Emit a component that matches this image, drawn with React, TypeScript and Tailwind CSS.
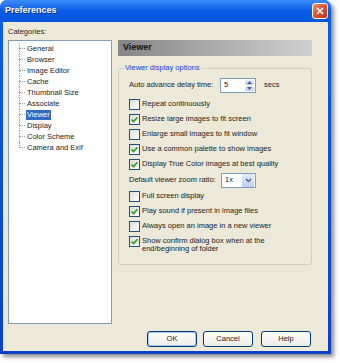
import React from "react";

const font = { fontFamily: '"Liberation Sans", Arial, sans-serif' };

function Check({ checked, label, second }: { checked?: boolean; label: string; second?: string }) {
  return (
    <div className="flex items-start gap-[2px]">
      <div className="w-[11px] h-[11px] shrink-0 border border-[#1C5180] bg-gradient-to-br from-[#DCDCD7] to-white flex items-center justify-center">
        {checked && (
          <svg width="7" height="7" viewBox="0 0 7 7">
            <path d="M0.5 3.5 L2.6 5.6 L6.5 1.2" stroke="#21A121" strokeWidth="1.6" fill="none" />
          </svg>
        )}
      </div>
      <div className="text-[7.5px] leading-[8px] text-[#222] pt-[1px] whitespace-nowrap">
        <div>{label}</div>
        {second && <div>{second}</div>}
      </div>
    </div>
  );
}

function XPButton({ label, def }: { label: string; def?: boolean }) {
  return (
    <div
      className={`w-[50px] h-[16px] rounded-[3px] border border-[#003C74] bg-gradient-to-b from-white to-[#ECEBE6] flex items-center justify-center text-[7.5px] text-[#222] ${
        def ? "shadow-[inset_0_0_0_1px_#A8C8F5]" : ""
      }`}
    >
      {label}
    </div>
  );
}

const items = [
  "General",
  "Browser",
  "Image Editor",
  "Cache",
  "Thumbnail Size",
  "Associate",
  "Viewer",
  "Display",
  "Color Scheme",
  "Camera and Exif",
];

export default function App() {
  return (
    <div className="w-[340px] h-[363px] bg-white" style={font}>
      <div className="w-[331px] h-[354px] rounded-t-[7px] bg-gradient-to-b from-[#0A5FEA] to-[#0841C8] shadow-[3px_3px_4px_rgba(0,0,0,0.45)] flex flex-col">
        {/* title bar */}
        <div className="h-[22px] shrink-0 rounded-t-[7px] bg-gradient-to-b from-[#3B8CF8] via-[#0A5BE6] to-[#0556DD] flex items-center justify-between pl-[5px] pr-[3px]">
          <span className="text-white font-bold text-[9px] [text-shadow:1px_1px_0_#0A2A7A]">Preferences</span>
          <div className="w-[16px] h-[16px] rounded-[3px] border border-white bg-gradient-to-br from-[#E8907A] via-[#D9522E] to-[#C4361A] flex items-center justify-center">
            <svg width="8" height="8" viewBox="0 0 8 8">
              <path d="M1 1 L7 7 M7 1 L1 7" stroke="white" strokeWidth="1.7" />
            </svg>
          </div>
        </div>
        {/* body */}
        <div className="flex-1 mx-[3px] mb-[3px] bg-[#ECE9D8] flex flex-col px-[5px] pt-[6px]">
          <div className="text-[7.5px] leading-[8px] text-[#222] h-[12px]">Categories:</div>
          <div className="flex gap-[6px]">
            {/* tree */}
            <div className="w-[104px] h-[284px] bg-white border border-[#7F9DB9] pt-[2px] relative">
              {items.map((it, i) => (
                <div key={it} className="h-[11px] flex items-center relative">
                  <div className="absolute left-[10px] top-0 border-l border-dotted border-[#A0A0A0]" style={{ height: i === items.length - 1 ? 6 : 11 }} />
                  <div className="absolute left-[10px] top-[5px] w-[6px] border-t border-dotted border-[#A0A0A0]" />
                  <span
                    className={`ml-[17px] text-[7.5px] leading-[10px] px-[1px] ${
                      it === "Viewer" ? "bg-[#316AC5] text-white" : "text-[#222]"
                    }`}
                  >
                    {it}
                  </span>
                </div>
              ))}
            </div>
            {/* right panel */}
            <div className="w-[194px] flex flex-col">
              <div className="h-[16px] bg-gradient-to-r from-[#858585] via-[#ACACAC] to-[#D0D0D0] flex items-center pl-[5px]">
                <span className="font-bold text-[9px] text-[#111]">Viewer</span>
              </div>
              <div className="relative mt-[12px] h-[197px] border border-[#D0D0BF] rounded-[3px] pl-[10px] pr-[4px] pt-[8px]">
                <div className="absolute -top-[6px] left-[5px] px-[1px] bg-[#ECE9D8] text-[7.5px] leading-[10px] text-[#0046D5]">
                  Viewer display options
                </div>
                <div className="flex items-center h-[16px]">
                  <span className="text-[7.5px] text-[#222] w-[91px] whitespace-nowrap">Auto advance delay time:</span>
                  <div className="w-[36px] h-[15px] border border-[#7F9DB9] bg-white flex items-center justify-between">
                    <span className="text-[7.5px] pl-[3px] text-[#222]">5</span>
                    <div className="w-[11px] h-full flex flex-col gap-[1px] p-[1px]">
                      <div className="flex-1 rounded-[1px] bg-gradient-to-b from-[#E3ECFC] to-[#BCD0F4] flex items-center justify-center">
                        <svg width="5" height="3" viewBox="0 0 5 3"><path d="M0 3 L2.5 0 L5 3" fill="#4D6185" /></svg>
                      </div>
                      <div className="flex-1 rounded-[1px] bg-gradient-to-b from-[#E3ECFC] to-[#BCD0F4] flex items-center justify-center">
                        <svg width="5" height="3" viewBox="0 0 5 3"><path d="M0 0 L2.5 3 L5 0" fill="#4D6185" /></svg>
                      </div>
                    </div>
                  </div>
                  <span className="text-[7.5px] text-[#222] ml-[8px]">secs</span>
                </div>
                <div className="flex flex-col gap-[4px] mt-[6px]">
                  <Check label="Repeat continuously" />
                  <Check checked label="Resize large images to fit screen" />
                  <Check label="Enlarge small images to fit window" />
                  <Check checked label="Use a common palette to show images" />
                  <Check checked label="Display True Color images at best quality" />
                </div>
                <div className="flex items-center h-[16px] mt-[2px]">
                  <span className="text-[7.5px] text-[#222] w-[92px] whitespace-nowrap">Default viewer zoom ratio:</span>
                  <div className="w-[35px] h-[15px] border border-[#7F9DB9] bg-white flex items-center justify-between">
                    <span className="text-[7.5px] pl-[3px] text-[#222]">1x</span>
                    <div className="w-[12px] h-[13px] mr-[1px] rounded-[1px] bg-gradient-to-b from-[#E3ECFC] to-[#BCD0F4] flex items-center justify-center">
                      <svg width="7" height="5" viewBox="0 0 7 5"><path d="M1 1 L3.5 3.5 L6 1" stroke="#4D6185" strokeWidth="1.5" fill="none" /></svg>
                    </div>
                  </div>
                </div>
                <div className="flex flex-col gap-[4px] mt-[3px]">
                  <Check label="Full screen display" />
                  <Check checked label="Play sound if present in image files" />
                  <Check label="Always open an image in a new viewer" />
                  <Check checked label="Show confirm dialog box when at the" second="end/beginning of folder" />
                </div>
              </div>
            </div>
          </div>
          <div className="flex justify-end mt-[7px] pr-[12px]">
            <XPButton label="OK" def />
            <div className="w-[6px]" />
            <XPButton label="Cancel" />
            <div className="w-[8px]" />
            <XPButton label="Help" />
          </div>
        </div>
      </div>
    </div>
  );
}
